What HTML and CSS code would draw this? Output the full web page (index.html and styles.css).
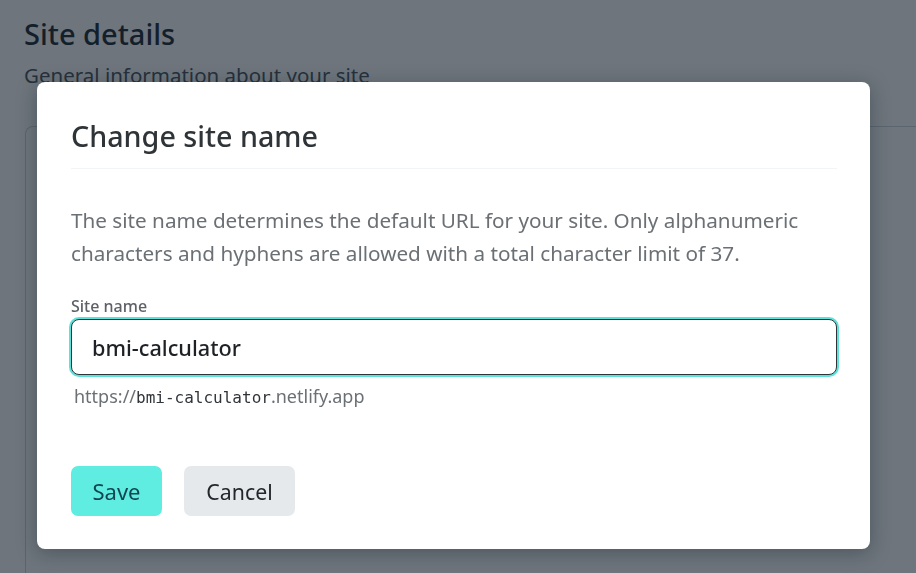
FILE: index.html
```html
<!DOCTYPE html>
<html lang="en">
<head>
<meta charset="utf-8">
<title>Change site name</title>
<link rel="stylesheet" href="styles.css">
</head>
<body>
<main class="page">
  <header class="page-head">
    <h1 class="page-title">Site details</h1>
    <p class="page-sub">General information about your site</p>
  </header>
  <section class="card"></section>
</main>

<div class="overlay">
  <div class="modal" role="dialog" aria-labelledby="dlg-title">
    <div class="modal-head">
      <h2 class="modal-title" id="dlg-title">Change site name</h2>
    </div>
    <div class="modal-body">
      <p class="desc">The site name determines the default URL for your site. Only alphanumeric characters and hyphens are allowed with a total character limit of 37.</p>
      <label class="field-label" for="site-name">Site name</label>
      <input class="field-input" id="site-name" type="text" value="bmi-calculator">
      <p class="hint">https://<code class="mono">bmi-calculator</code>.netlify.app</p>
    </div>
    <div class="modal-actions">
      <button class="btn btn-primary" type="button">Save</button>
      <button class="btn btn-secondary" type="button">Cancel</button>
    </div>
  </div>
</div>
</body>
</html>
```

FILE: styles.css
```css
* { box-sizing: border-box; }
html, body { margin: 0; height: 100%; }
body {
  font-family: "Noto Sans", "Open Sans", sans-serif;
  background: #ffffff;
  overflow: hidden;
}

.page {
  padding: 14px 0 0 24px;
  height: 100%;
  display: flex;
  flex-direction: column;
}
.page-title {
  margin: 0;
  font-size: 29px;
  font-weight: 500;
  line-height: 40px;
  color: #1c2a32;
}
.page-sub {
  margin: 6px 0 0;
  font-size: 20.5px;
  line-height: 30px;
  color: #4a5660;
}
.card {
  margin: 36px 0 0 1px;
  flex: 1;
  border: 1px solid #cfd6da;
  border-right: none;
  border-bottom: none;
  border-radius: 8px 0 0 0;
  background: #ffffff;
}

.overlay {
  position: fixed;
  inset: 0;
  background: rgba(14, 25, 37, 0.6);
}

.modal {
  position: absolute;
  left: 37px;
  top: 82px;
  width: 833px;
  background: #ffffff;
  border-radius: 8px;
  box-shadow: 0 4px 20px rgba(14, 30, 37, 0.35);
  padding: 0 33px 33px 34px;
}
.modal-head {
  padding-top: 34px;
  border-bottom: 1px solid #f3f4f5;
  padding-bottom: 12px;
}
.modal-title {
  margin: 0;
  font-size: 28.7px;
  font-weight: 500;
  line-height: 40px;
  color: #2f3438;
}
.modal-body {
  padding-top: 35px;
  display: flex;
  flex-direction: column;
}
.desc {
  margin: 0;
  font-size: 20.7px;
  line-height: 33px;
  color: #6b7075;
}
.field-label {
  margin-top: 26px;
  font-size: 16px;
  font-weight: 500;
  line-height: 20px;
  color: #5d6166;
}
.field-input {
  margin-top: 3px;
  height: 56px;
  width: 100%;
  padding: 0 20px;
  font-family: inherit;
  font-size: 21.7px;
  font-weight: 500;
  color: #1e2226;
  border: 1px solid #2f3438;
  border-radius: 8px;
  outline: none;
  box-shadow: 0 0 0 2px #5de2da;
  background: #fff;
}
.hint {
  margin: 10px 0 0 3px;
  font-size: 18px;
  line-height: 22px;
  color: #6b7075;
}
.mono {
  font-family: "DejaVu Sans Mono", "Liberation Mono", monospace;
  font-size: 16px;
  color: #30353a;
}
.modal-actions {
  margin-top: 57px;
  display: flex;
  gap: 22px;
}
.btn {
  height: 50px;
  border: none;
  border-radius: 7px;
  font-family: inherit;
  padding: 0;
  cursor: pointer;
}
.btn-primary {
  background: #5eede0;
  color: #134652;
  width: 91px;
  font-size: 22px;
}
.btn-secondary {
  background: #e6e9ec;
  color: #23272b;
  width: 111px;
  font-size: 21.3px;
}
```
